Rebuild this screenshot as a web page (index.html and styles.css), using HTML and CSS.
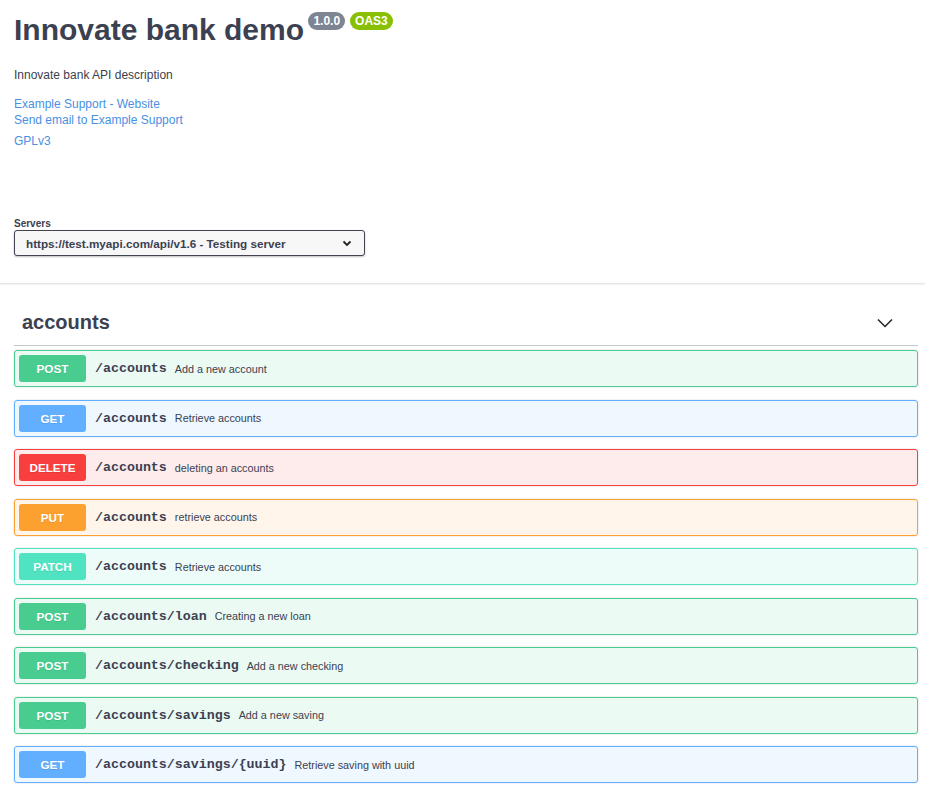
FILE: index.html
```html
<!DOCTYPE html>
<html>
<head>
<meta charset="utf-8">
<link rel="stylesheet" href="styles.css">
</head>
<body>
<div class="info-wrap">
  <div class="info">
    <h2 class="title">Innovate bank demo <span class="badges"><span class="badge version">1.0.0</span><span class="badge oas">OAS3</span></span></h2>
    <p class="description">Innovate bank API description</p>
    <div class="contact">
      <a class="link" href="#">Example Support - Website</a>
      <a class="link" href="#">Send email to Example Support</a>
    </div>
    <div class="license"><a class="link" href="#">GPLv3</a></div>
  </div>
</div>
<div class="scheme-container">
  <div class="servers">
    <span class="servers-title">Servers</span>
    <div class="select">
      <span>https://test.myapi.com/api/v1.6 - Testing server</span>
      <svg class="select-arrow" width="10" height="7" viewBox="0 0 10 7"><path d="M1.5 1.5 L5 5 L8.5 1.5" fill="none" stroke="#222" stroke-width="1.8"/></svg>
    </div>
  </div>
</div>
<div class="ops">
  <div class="tag">
    <h3 class="tag-name">accounts</h3>
    <svg class="tag-arrow" width="16" height="10" viewBox="0 0 16 10"><path d="M1 1.5 L8 8.5 L15 1.5" fill="none" stroke="#222" stroke-width="1.5"/></svg>
  </div>
  <div class="opblock post"><span class="method">POST</span><span class="path">/accounts</span><span class="desc">Add a new account</span></div>
  <div class="opblock get"><span class="method">GET</span><span class="path">/accounts</span><span class="desc">Retrieve accounts</span></div>
  <div class="opblock delete"><span class="method">DELETE</span><span class="path">/accounts</span><span class="desc">deleting an accounts</span></div>
  <div class="opblock put"><span class="method">PUT</span><span class="path">/accounts</span><span class="desc">retrieve accounts</span></div>
  <div class="opblock patch"><span class="method">PATCH</span><span class="path">/accounts</span><span class="desc">Retrieve accounts</span></div>
  <div class="opblock post"><span class="method">POST</span><span class="path">/accounts/loan</span><span class="desc">Creating a new loan</span></div>
  <div class="opblock post"><span class="method">POST</span><span class="path">/accounts/checking</span><span class="desc">Add a new checking</span></div>
  <div class="opblock post"><span class="method">POST</span><span class="path">/accounts/savings</span><span class="desc">Add a new saving</span></div>
  <div class="opblock get"><span class="method">GET</span><span class="path">/accounts/savings/{uuid}</span><span class="desc">Retrieve saving with uuid</span></div>
</div>
</body>
</html>
```
FILE: styles.css
```css
html, body {
  margin: 0;
  padding: 0;
  background: #fff;
  font-family: "Liberation Sans", Arial, sans-serif;
  color: #3b4151;
}
.info-wrap {
  padding: 0 7px 0 14px;
}
.info {
  padding-top: 12px;
  height: 193px;
}
.title {
  margin: 0;
  font-size: 30px;
  line-height: 36px;
  font-weight: 700;
  color: #3b4151;
}
.badges {
  display: inline-flex;
  gap: 5px;
  vertical-align: top;
  margin-left: -4px;
}
.badge {
  display: inline-block;
  font-size: 12px;
  line-height: 14px;
  font-weight: 700;
  color: #fff;
  padding: 2px 5px;
  border-radius: 10px;
}
.version { background: #7d8492; }
.oas { background: #89bf04; }
.description {
  margin: 19px 0 0;
  font-size: 12px;
  line-height: 16px;
}
.contact {
  margin-top: 13px;
  display: flex;
  flex-direction: column;
}
.link {
  color: #4990e2;
  text-decoration: none;
  font-size: 12px;
  line-height: 16px;
}
.license {
  margin-top: 3px;
}
.scheme-container {
  padding: 13px 7px 27px 14px;
  box-shadow: 0 1px 2px 0 rgba(0,0,0,.15);
  margin-bottom: 17px;
}
.servers-title {
  display: block;
  font-size: 10px;
  font-weight: 700;
  line-height: 12px;
  margin-bottom: 0;
}
.select {
  width: 338px;
  height: 24px;
  box-sizing: content-box;
  border: 1.5px solid #41444e;
  border-radius: 3px;
  background: #f7f7f7;
  box-shadow: 0 1px 2px 0 rgba(0,0,0,.25);
  display: flex;
  align-items: center;
  justify-content: space-between;
  padding: 0 0 0 11px;
  font-size: 11.7px;
  font-weight: 700;
  color: #3b4151;
}
.select-arrow {
  margin-right: 12px;
}
.ops {
  padding: 0 7px 0 14px;
}
.tag {
  display: flex;
  align-items: center;
  justify-content: space-between;
  height: 45px;
  border-bottom: 1px solid rgba(59,65,81,.3);
  margin-bottom: 4px;
  padding: 0 25px 0 8px;
}
.tag-name {
  margin: 0;
  font-size: 20px;
  font-weight: 700;
}
.opblock {
  display: flex;
  align-items: center;
  height: 35px;
  border: 1px solid;
  border-radius: 3px;
  box-shadow: 0 0 2px rgba(0,0,0,.19);
  padding: 0 4px;
  margin-bottom: 12.5px;
}
.method {
  width: 67px;
  height: 27px;
  border-radius: 3px;
  display: flex;
  align-items: center;
  justify-content: center;
  color: #fff;
  font-size: 11.7px;
  font-weight: 700;
  text-shadow: 0 1px 0 rgba(0,0,0,.1);
}
.path {
  font-family: "Liberation Mono", "Courier New", monospace;
  font-weight: 700;
  font-size: 13.3px;
  padding: 0 8px 0 9px;
  color: #3b4151;
}
.desc {
  font-size: 10.8px;
  color: #3b4151;
}
.post { background: rgba(73,204,144,.1); border-color: #49cc90; }
.post .method { background: #49cc90; }
.get { background: rgba(97,175,254,.1); border-color: #61affe; }
.get .method { background: #61affe; }
.delete { background: rgba(249,62,62,.1); border-color: #f93e3e; }
.delete .method { background: #f93e3e; }
.put { background: rgba(252,161,48,.1); border-color: #fca130; }
.put .method { background: #fca130; }
.patch { background: rgba(80,227,194,.1); border-color: #50e3c2; }
.patch .method { background: #50e3c2; }
```
